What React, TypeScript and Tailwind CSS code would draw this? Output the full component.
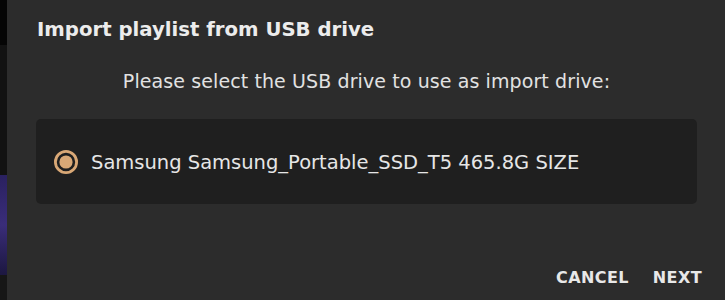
import React from "react";

const font = { fontFamily: '"DejaVu Sans", "Noto Sans", sans-serif' };

function Radio() {
  return (
    <svg width="24" height="24" viewBox="0 0 24 24" className="shrink-0">
      <circle cx="12" cy="12" r="10.6" fill="none" stroke="#d9a876" strokeWidth="2.8" />
      <circle cx="12" cy="12" r="6.6" fill="#d9a876" />
    </svg>
  );
}

export default function App() {
  return (
    <div className="flex h-[300px] w-[725px] overflow-hidden" style={font}>
      {/* page behind the dialog */}
      <div className="flex w-[7px] shrink-0 flex-col">
        <div className="h-[45px] bg-[#050505]" />
        <div className="h-[130px] bg-[#121212]" />
        <div className="h-[100px] bg-gradient-to-b from-[#2a2160] via-[#3a2d7a] to-[#1c1740]" />
        <div className="flex-1 bg-[#161616]" />
      </div>

      {/* dialog */}
      <div className="flex flex-1 flex-col bg-[#2c2c2c] pl-[29px] pr-[28px]">
        <h2 className="mt-[18px] pl-[1px] text-[19.7px] font-bold leading-[24px] text-[#ececec]">
          Import playlist from USB drive
        </h2>

        <p className="mt-[27px] text-center text-[19px] leading-[24px] tracking-[0.1px] text-[#e2e2e2]">
          Please select the USB drive to use as import drive:
        </p>

        <div className="mt-[26px] flex h-[85px] items-center gap-[13px] rounded-[5px] bg-[#1f1f1f] pl-[18px]">
          <Radio />
          <span className="pt-[2px] text-[19.5px] leading-[24px] text-[#e6e6e6]">
            Samsung Samsung_Portable_SSD_T5 465.8G SIZE
          </span>
        </div>

        <div className="mt-auto mb-[12px] mr-[-5px] flex justify-end gap-[24px]">
          <button className="text-[16px] font-bold uppercase leading-[20px] tracking-[0.4px] text-[#e8e8e8]">
            Cancel
          </button>
          <button className="text-[16px] font-bold uppercase leading-[20px] tracking-[0.4px] text-[#e8e8e8]">
            Next
          </button>
        </div>
      </div>
    </div>
  );
}
